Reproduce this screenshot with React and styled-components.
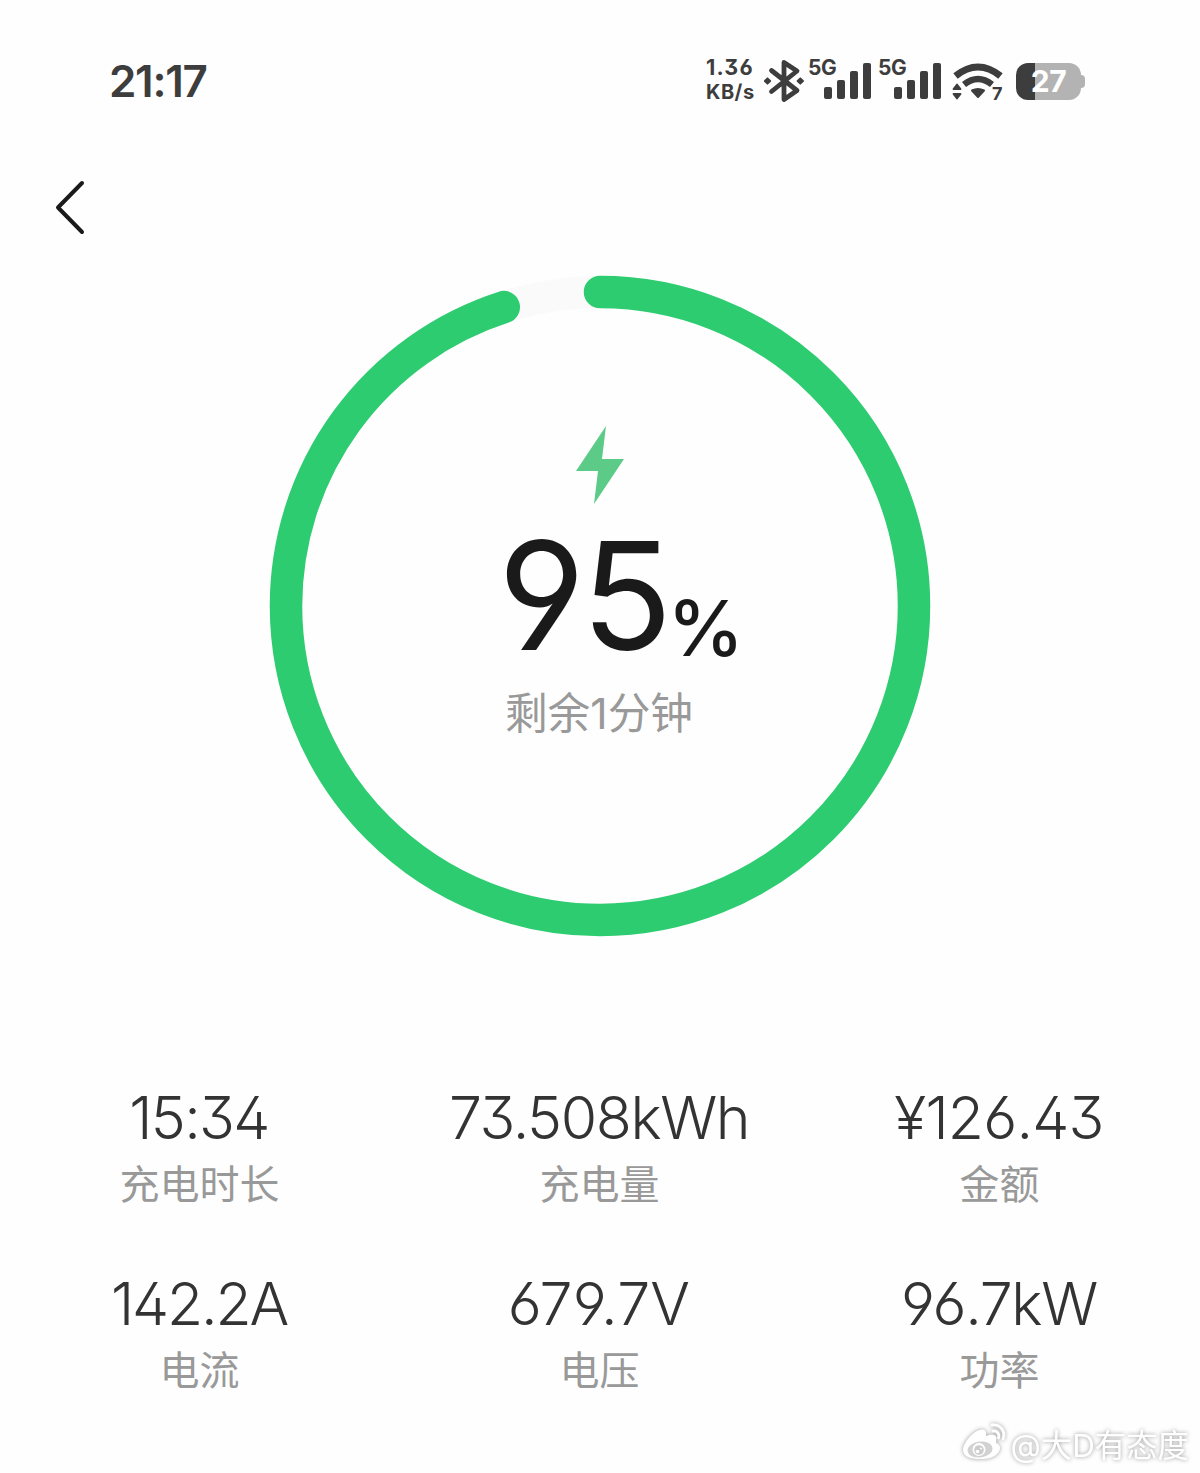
import React from "react";
import styled, { createGlobalStyle } from "styled-components";

const GlobalStyle = createGlobalStyle`
  * {
    box-sizing: border-box;
  }
  body {
    margin: 0;
    background-color: #fefefe;
    font-family: Inter, "Noto Sans CJK SC", sans-serif;
    font-feature-settings: "ss01" 1;
  }
`;

const Screen = styled.main`
  display: flex;
  flex-direction: column;
  width: 1200px;
  height: 1473px;
  overflow: hidden;
`;

const StatusBar = styled.header`
  display: flex;
  align-items: center;
  justify-content: space-between;
  height: 162px;
  padding: 0 115px 0 109px;
  color: #3d3d3d;
`;

const Clock = styled.time`
  font-size: 44px;
  font-weight: 600;
  line-height: 54px;
  letter-spacing: -1.3px;
`;

const StatusIcons = styled.div`
  display: flex;
  align-items: center;
  height: 48px;
`;

const Speed = styled.div`
  display: flex;
  flex-direction: column;
  width: 58px;
  margin-top: -2px;
  font-size: 21.5px;
  font-weight: 700;
  line-height: 25px;
  letter-spacing: 1.2px;
  white-space: nowrap;
`;

const SpeedUnit = styled.span`
  font-size: 20px;
  letter-spacing: 0.5px;
`;

const Signal = styled.div`
  display: flex;
  width: 63px;
  height: 42px;
  margin-top: -3px;
  margin-left: ${(props) => props.$gap}px;
`;

const Network = styled.span`
  width: 16px;
  font-size: 21px;
  font-weight: 700;
  line-height: 18px;
  letter-spacing: -0.5px;
`;

const WifiIcon = styled.svg`
  margin-left: 9px;
`;

const Battery = styled.div`
  display: flex;
  align-items: center;
  margin-left: 13px;
`;

const BatteryBody = styled.div`
  width: 65px;
  height: 37px;
  border-radius: 12px;
  background: linear-gradient(to right, #3d3d3d 19px, #b3b3b3 19px);
  color: #fff;
  font-size: 30px;
  font-weight: 700;
  line-height: 37px;
  letter-spacing: -0.5px;
  text-align: center;
`;

const BatteryTip = styled.div`
  width: 4px;
  height: 13px;
  border-radius: 0 4px 4px 0;
  background-color: #b3b3b3;
`;

const NavBar = styled.nav`
  height: 108px;
  padding: 18px 54px;
`;

const BackButton = styled.button`
  display: block;
  padding: 0;
  border: none;
  background: none;
`;

const Gauge = styled.section`
  display: grid;
  justify-content: center;
  height: 672px;
`;

const Ring = styled.svg`
  grid-area: 1 / 1;
`;

const GaugeContent = styled.div`
  grid-area: 1 / 1;
  display: flex;
  flex-direction: column;
  align-items: center;
  padding-top: 156px;
`;

const Percent = styled.div`
  display: flex;
  align-items: flex-start;
  height: 160px;
  margin-top: 2px;
  padding-left: 38px;
  color: #1a1a1a;
  font-size: 150px;
  line-height: 180px;
  letter-spacing: -4px;
`;

const PercentSign = styled.span`
  margin-top: 75px;
  margin-left: -1px;
  font-size: 77px;
  font-weight: 500;
  line-height: 94px;
`;

const Remaining = styled.div`
  margin-top: 18px;
  padding-right: 2px;
  color: #999;
  font-size: 42.7px;
  line-height: 60px;
`;

const Stats = styled.section`
  display: grid;
  grid-template-columns: repeat(3, 400px);
  row-gap: 55px;
  padding-top: 141px;
`;

const Stat = styled.div`
  display: flex;
  flex-direction: column;
  align-items: center;
  height: 131px;
`;

const Value = styled.div`
  padding-right: 2px;
  color: #333;
  font-size: 59px;
  font-weight: 350;
  line-height: 70px;
  letter-spacing: ${(props) => props.$spacing}px;
  white-space: nowrap;
`;

const Label = styled.div`
  margin-top: 1px;
  padding-right: 1px;
  color: #999;
  font-size: 40px;
  line-height: 62px;
`;

const Watermark = styled.footer`
  display: flex;
  align-items: center;
  justify-content: flex-end;
  gap: 2px;
  height: 56px;
  margin-top: 15px;
  padding-right: 11px;
  color: #fff;
  font-size: 31.4px;
  filter: drop-shadow(0 0 2px rgba(0, 0, 0, 0.4));
`;

const stats = [
  { value: "15:34", label: "充电时长", spacing: -1.7 },
  { value: "73.508kWh", label: "充电量", spacing: -1.4 },
  { value: "¥126.43", label: "金额", spacing: -0.8 },
  { value: "142.2A", label: "电流", spacing: -2.2 },
  { value: "679.7V", label: "电压", spacing: 0.2 },
  { value: "96.7kW", label: "功率", spacing: -1.3 },
];

const level = 95;
const circumference = 2 * Math.PI * 314;

function Bluetooth() {
  return (
    <svg width="42" height="44" viewBox="0 0 42 44" fill="none">
      <path
        d="M7.500 11.500 33 31.500 20 40.500V3.500L33 12 7.500 32.500"
        stroke="currentColor"
        strokeWidth="4.800"
        strokeLinecap="round"
        strokeLinejoin="round"
      />
      <path
        d="m3.500 19.300 2.700 2.700-2.700 2.700L.8 22zM36.300 19.300l2.700 2.700-2.700 2.700-2.700-2.700z"
        fill="currentColor"
        stroke="currentColor"
        strokeWidth="1.800"
        strokeLinejoin="round"
      />
    </svg>
  );
}

function CellSignal({ gap }) {
  return (
    <Signal $gap={gap}>
      <Network>5G</Network>
      <svg width="47" height="42" viewBox="0 0 47 42" fill="currentColor">
        <rect x="0" y="28" width="8" height="12" rx="2" />
        <rect x="13" y="21" width="8" height="19" rx="2" />
        <rect x="26" y="12" width="8" height="28" rx="2" />
        <rect x="39" y="4" width="8" height="36" rx="2" />
      </svg>
    </Signal>
  );
}

function Wifi() {
  return (
    <WifiIcon width="53" height="44" viewBox="0 0 53 44" fill="none">
      <path d="M5.500 17Q28 -1 50.500 17" stroke="currentColor" strokeWidth="7" />
      <path d="M14 25.500Q28 14.500 42 25.500" stroke="currentColor" strokeWidth="6.500" />
      <path
        d="M22 31.500Q28 28.500 34 31.500L28 38Z"
        fill="currentColor"
        stroke="currentColor"
        strokeWidth="2"
        strokeLinejoin="round"
      />
      <path
        d="M3.500 30 7 25.500l3.500 4.500zM3.500 35h7L7 39.500z"
        fill="currentColor"
        stroke="currentColor"
        strokeWidth="1.800"
        strokeLinejoin="round"
      />
      <text x="42" y="41" fill="currentColor" fontSize="18" fontWeight="700">
        7
      </text>
    </WifiIcon>
  );
}

function WeiboLogo() {
  return (
    <svg width="48" height="42" viewBox="0 0 48 42" fill="none">
      <path
        d="M3 28C3 21 13 9 21 7.500c4-.6 6 2 5 6.500 5-2 11-2 10.500 3-.2 2-1 3 0 4 7 3 4 15-13.500 16C12 37.500 3 35 3 28z"
        fill="#fff"
      />
      <ellipse cx="20" cy="27.500" rx="12.500" ry="8" fill="#d2d2d2" transform="rotate(-7 20 27.500)" />
      <circle cx="19" cy="27.500" r="6.500" fill="#fff" />
      <circle cx="19" cy="28" r="4.800" fill="#ccc" />
      <circle cx="17.500" cy="29.500" r="1.800" fill="#fff" />
      <circle cx="21" cy="26.500" r="1" fill="#fff" />
      <path d="M32 3c8-1 14 6 11 14M33 9c4-.5 7 3 5.500 7" stroke="#fff" strokeWidth="2.800" strokeLinecap="round" />
    </svg>
  );
}

function App() {
  return (
    <>
      <GlobalStyle />
      <Screen>
        <StatusBar>
          <Clock>21:17</Clock>
          <StatusIcons>
            <Speed>
              <span>1.36</span>
              <SpeedUnit>KB/s</SpeedUnit>
            </Speed>
            <Bluetooth />
            <CellSignal gap={2} />
            <CellSignal gap={7} />
            <Wifi />
            <Battery>
              <BatteryBody>27</BatteryBody>
              <BatteryTip />
            </Battery>
          </StatusIcons>
        </StatusBar>
        <NavBar>
          <BackButton aria-label="返回">
            <svg width="32" height="56" viewBox="0 0 32 56" fill="none">
              <path d="M28 3 4 27.500 28 52" stroke="#1a1a1a" strokeWidth="4" strokeLinecap="round" strokeLinejoin="round" />
            </svg>
          </BackButton>
        </NavBar>
        <Gauge>
          <Ring width="672" height="672" viewBox="-336 -336 672 672" fill="none">
            <circle r="314" stroke="#fafafa" strokeWidth="32" />
            <circle
              r="314"
              stroke="#2ecc71"
              strokeWidth="32.500"
              strokeLinecap="round"
              strokeDasharray={`${(circumference * level) / 100} ${circumference}`}
              transform="rotate(-90)"
            />
          </Ring>
          <GaugeContent>
            <svg width="50" height="78" viewBox="0 0 50 78">
              <path d="M31 0 1 45h22l-4 33 30-45H27z" fill="#5dcb88" />
            </svg>
            <Percent>
              {level}
              <PercentSign>%</PercentSign>
            </Percent>
            <Remaining>剩余1分钟</Remaining>
          </GaugeContent>
        </Gauge>
        <Stats>
          {stats.map((stat) => (
            <Stat key={stat.label}>
              <Value $spacing={stat.spacing}>{stat.value}</Value>
              <Label>{stat.label}</Label>
            </Stat>
          ))}
        </Stats>
        <Watermark>
          <WeiboLogo />
          @大D有态度
        </Watermark>
      </Screen>
    </>
  );
}

export default App;
